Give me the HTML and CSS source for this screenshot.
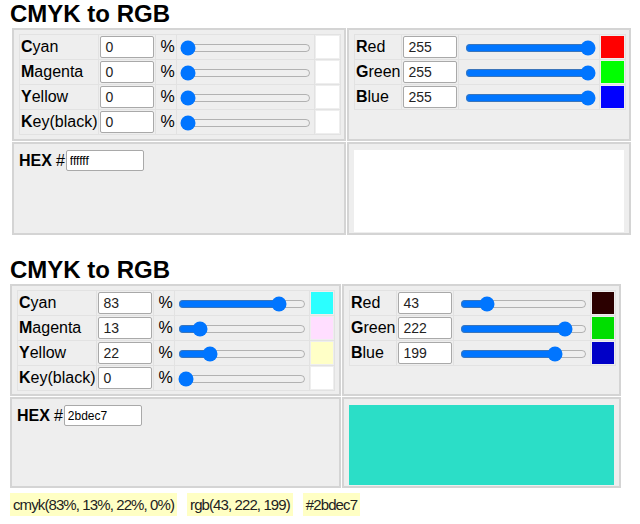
FILE: index.html
```html
<!DOCTYPE html>
<html lang="en">
<head>
    <meta charset="UTF-8">
    <title>CMYK to RGB</title>
    <link rel="stylesheet" href="styles.css">
</head>
<body>

    <!-- converter, initial state -->
    <section class="converter first">
        <h1>CMYK to RGB</h1>
        <div class="panel">
            <div class="cell">
                <table class="channels cmyk">
                    <tr>
                        <td class="label"><b>C</b>yan</td>
                        <td><input class="num" type="text" value="0"></td>
                        <td class="unit">%</td>
                        <td><input class="slider" type="range" min="0" max="100" value="0"></td>
                        <td><span class="swatch" style="background:#ffffff"></span></td>
                    </tr>
                    <tr>
                        <td class="label"><b>M</b>agenta</td>
                        <td><input class="num" type="text" value="0"></td>
                        <td class="unit">%</td>
                        <td><input class="slider" type="range" min="0" max="100" value="0"></td>
                        <td><span class="swatch" style="background:#ffffff"></span></td>
                    </tr>
                    <tr>
                        <td class="label"><b>Y</b>ellow</td>
                        <td><input class="num" type="text" value="0"></td>
                        <td class="unit">%</td>
                        <td><input class="slider" type="range" min="0" max="100" value="0"></td>
                        <td><span class="swatch" style="background:#ffffff"></span></td>
                    </tr>
                    <tr>
                        <td class="label"><b>K</b>ey(black)</td>
                        <td><input class="num" type="text" value="0"></td>
                        <td class="unit">%</td>
                        <td><input class="slider" type="range" min="0" max="100" value="0"></td>
                        <td><span class="swatch" style="background:#ffffff"></span></td>
                    </tr>
                </table>
            </div>
            <div class="cell">
                <table class="channels rgb">
                    <tr>
                        <td class="label"><b>R</b>ed</td>
                        <td><input class="num" type="text" value="255"></td>
                        <td><input class="slider" type="range" min="0" max="255" value="255"></td>
                        <td><span class="swatch" style="background:#ff0000"></span></td>
                    </tr>
                    <tr>
                        <td class="label"><b>G</b>reen</td>
                        <td><input class="num" type="text" value="255"></td>
                        <td><input class="slider" type="range" min="0" max="255" value="255"></td>
                        <td><span class="swatch" style="background:#00ff00"></span></td>
                    </tr>
                    <tr>
                        <td class="label"><b>B</b>lue</td>
                        <td><input class="num" type="text" value="255"></td>
                        <td><input class="slider" type="range" min="0" max="255" value="255"></td>
                        <td><span class="swatch" style="background:#0000ff"></span></td>
                    </tr>
                </table>
            </div>
            <div class="cell hex-cell">
                <label class="hex"><b>HEX</b> #<input class="hex-input" type="text" value="ffffff"></label>
            </div>
            <div class="cell">
                <div class="preview" style="background:#ffffff"></div>
            </div>
        </div>
    </section>

    <!-- converter, filled in -->
    <section class="converter second">
        <h1>CMYK to RGB</h1>
        <div class="panel">
            <div class="cell">
                <table class="channels cmyk">
                    <tr>
                        <td class="label"><b>C</b>yan</td>
                        <td><input class="num" type="text" value="83"></td>
                        <td class="unit">%</td>
                        <td><input class="slider" type="range" min="0" max="100" value="83"></td>
                        <td><span class="swatch" style="background:#2bffff"></span></td>
                    </tr>
                    <tr>
                        <td class="label"><b>M</b>agenta</td>
                        <td><input class="num" type="text" value="13"></td>
                        <td class="unit">%</td>
                        <td><input class="slider" type="range" min="0" max="100" value="13"></td>
                        <td><span class="swatch" style="background:#ffdeff"></span></td>
                    </tr>
                    <tr>
                        <td class="label"><b>Y</b>ellow</td>
                        <td><input class="num" type="text" value="22"></td>
                        <td class="unit">%</td>
                        <td><input class="slider" type="range" min="0" max="100" value="22"></td>
                        <td><span class="swatch" style="background:#ffffc7"></span></td>
                    </tr>
                    <tr>
                        <td class="label"><b>K</b>ey(black)</td>
                        <td><input class="num" type="text" value="0"></td>
                        <td class="unit">%</td>
                        <td><input class="slider" type="range" min="0" max="100" value="0"></td>
                        <td><span class="swatch" style="background:#ffffff"></span></td>
                    </tr>
                </table>
            </div>
            <div class="cell">
                <table class="channels rgb">
                    <tr>
                        <td class="label"><b>R</b>ed</td>
                        <td><input class="num" type="text" value="43"></td>
                        <td><input class="slider" type="range" min="0" max="255" value="43"></td>
                        <td><span class="swatch" style="background:#2b0000"></span></td>
                    </tr>
                    <tr>
                        <td class="label"><b>G</b>reen</td>
                        <td><input class="num" type="text" value="222"></td>
                        <td><input class="slider" type="range" min="0" max="255" value="222"></td>
                        <td><span class="swatch" style="background:#00de00"></span></td>
                    </tr>
                    <tr>
                        <td class="label"><b>B</b>lue</td>
                        <td><input class="num" type="text" value="199"></td>
                        <td><input class="slider" type="range" min="0" max="255" value="199"></td>
                        <td><span class="swatch" style="background:#0000c7"></span></td>
                    </tr>
                </table>
            </div>
            <div class="cell hex-cell">
                <label class="hex"><b>HEX</b> #<input class="hex-input" type="text" value="2bdec7"></label>
            </div>
            <div class="cell">
                <div class="preview" style="background:#2bdec7"></div>
            </div>
        </div>
        <div class="results">
            <span class="result">cmyk(83%, 13%, 22%, 0%)</span>
            <span class="result">rgb(43, 222, 199)</span>
            <span class="result">#2bdec7</span>
        </div>
    </section>

</body>
</html>
```

FILE: styles.css
```css
body {
    margin: 0;
    padding: 0 10px;
    background: #fff;
    color: #000;
    font-family: "Liberation Sans", Arial, sans-serif;
    font-size: 16px;
}

h1 {
    margin: 0;
    font-size: 24px;
    line-height: 28px;
}

.second {
    margin-top: 21px;
}

.panel {
    display: grid;
    grid-template-columns: 334px minmax(0, 1fr);
    grid-template-rows: 113px 93px;
    gap: 1px;
    width: 619px;
    margin-left: 2px;
}

.second .panel {
    grid-template-columns: 331px minmax(0, 1fr);
    grid-template-rows: 112px 91px;
    width: 611px;
    margin-left: 0;
}

.cell {
    box-sizing: border-box;
    background: #eee;
    border: 2px solid #d4d4d4;
    padding: 4px 5px;
}

/* channel rows */
.channels {
    border-collapse: collapse;
    width: 100%;
}

.channels td {
    height: 24px;
    padding: 0 1px;
    border: 1px solid #e2e2e2;
    vertical-align: middle;
    white-space: nowrap;
}

.cmyk .label { width: 77px; }
.rgb .label { width: 47px; }

.unit {
    width: 20px;
    padding-left: 4px !important;
}

.num {
    box-sizing: border-box;
    width: 54px;
    height: 22px;
    margin: 0;
    padding: 0 4px;
    border: 1px solid #a9a9a9;
    border-radius: 2px;
    font-family: "Liberation Sans", Arial, sans-serif;
    font-size: 14px;
    color: #222;
    background: #fff;
    vertical-align: middle;
}

.slider {
    width: 131px;
    margin: 0 2px;
    vertical-align: middle;
}

.rgb .slider {
    margin-left: 5px;
}

.second .cmyk .slider { width: 128px; }
.second .rgb .slider { width: 127px; }

.swatch {
    display: block;
    width: 23px;
    height: 22px;
    margin-left: auto;
}

.second .swatch {
    width: 22px;
}

/* hex row */
.hex-cell {
    padding-top: 6px;
}

.hex {
    display: flex;
    align-items: center;
}

.hex b {
    margin-right: 4px;
}

.hex-input {
    box-sizing: border-box;
    width: 78px;
    height: 21px;
    margin: 0 0 0 1px;
    padding: 0 3px;
    border: 1px solid #a9a9a9;
    border-radius: 2px;
    font-family: "Liberation Sans", Arial, sans-serif;
    font-size: 12px;
    background: #fff;
}

.preview {
    height: 82px;
    margin: 2px 0 0;
}

.second .preview {
    height: 80px;
}

/* output strings */
.results {
    display: flex;
    gap: 10px;
    margin-top: 5px;
}

.result {
    padding: 3px 3px;
    background: #ffffc4;
    font-size: 15px;
    line-height: 17px;
    letter-spacing: -0.9px;
    color: #222;
}
```
